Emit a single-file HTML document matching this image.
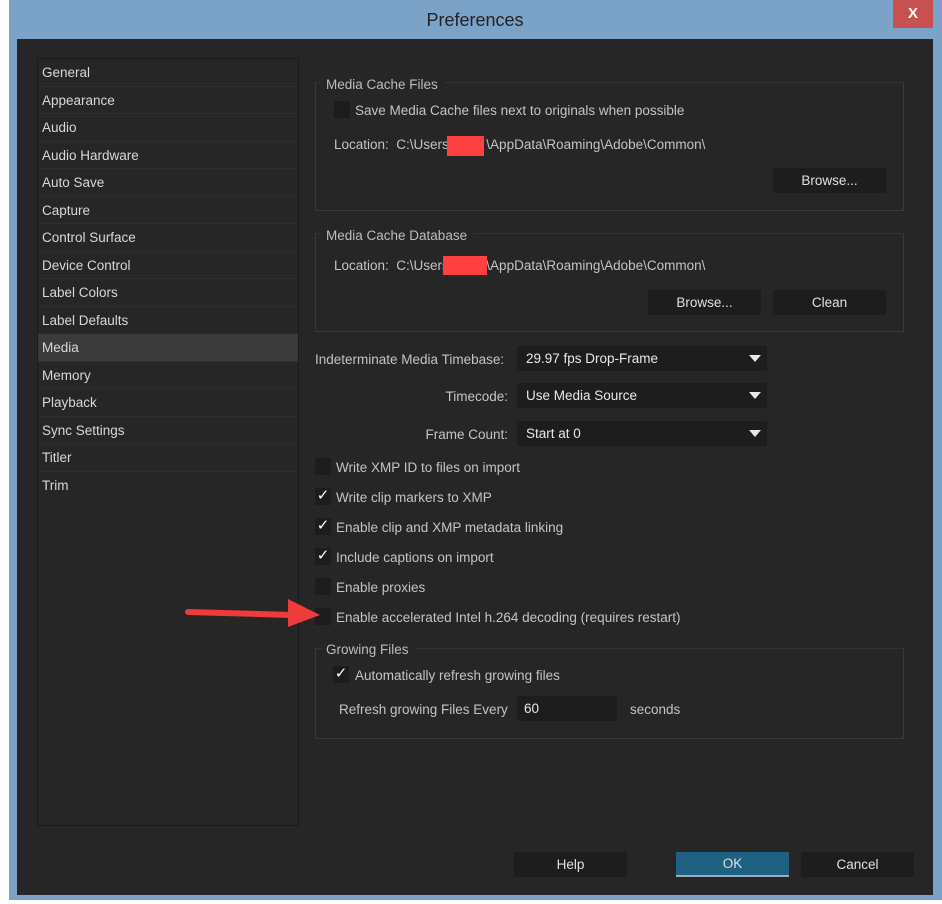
<!DOCTYPE html>
<html><head><style>
body{margin:0;width:942px;height:904px;background:#fff;position:relative;overflow:hidden;font-family:"Liberation Sans",sans-serif;font-size:13.5px;color:#c4c4c4}
div,span{position:absolute;box-sizing:border-box}
.win{left:9px;top:0;width:933px;height:900px;background:#7ba3c7}
.in{left:17px;top:39px;width:916px;height:856px;background:#262626}
.t{white-space:nowrap;margin-top:1px}
.list{left:37px;top:58px;width:262px;height:768px;border:1px solid #1a1a1a;background:#262626}
.li{left:0;width:260px;height:27.5px;border-bottom:1px solid #2e2e2e;padding:6px 4px 0;color:#d8d8d8;font-size:13.5px}
.grp{border:1px solid #3a3a3a;border-top-color:#333}
.gt{background:#262626;padding:0 6px 0 4px;color:#bdbdbd}
.btn{background:#1d1d1d;color:#e0e0e0;text-align:center;line-height:25px;height:25px}
.dd{background:#1d1d1d;color:#e8e8e8;height:25px;padding-left:9px;line-height:26px}
.dd.a:after{content:"";position:absolute;right:6px;top:9px;border-left:6px solid transparent;border-right:6px solid transparent;border-top:7px solid #e8e8e8}
.cb{width:16px;height:17px;background:#1c1c1c;color:#fff;font-size:15px;line-height:16px;text-align:center}
.red{background:#fe4040}
</style></head><body>
<div class="win"></div>
<div class="t" style="left:0;width:950px;top:9px;text-align:center;font-size:18px;color:#222">Preferences</div>
<div style="left:893px;top:0;width:40px;height:28px;background:#c75050;color:#fff;font-weight:bold;text-align:center;line-height:28px;font-size:15px">X</div>
<div class="in"></div>
<div class="list">
<div class="li" style="top:0">General</div>
<div class="li" style="top:27.5px">Appearance</div>
<div class="li" style="top:55px">Audio</div>
<div class="li" style="top:82.5px">Audio Hardware</div>
<div class="li" style="top:110px">Auto Save</div>
<div class="li" style="top:137.5px">Capture</div>
<div class="li" style="top:165px">Control Surface</div>
<div class="li" style="top:192.5px">Device Control</div>
<div class="li" style="top:220px">Label Colors</div>
<div class="li" style="top:247.5px">Label Defaults</div>
<div class="li" style="top:275px;background:#3b3b3b">Media</div>
<div class="li" style="top:302.5px">Memory</div>
<div class="li" style="top:330px">Playback</div>
<div class="li" style="top:357.5px">Sync Settings</div>
<div class="li" style="top:385px">Titler</div>
<div class="li" style="top:412.5px;border:none">Trim</div>
</div>

<div class="grp" style="left:315px;top:82px;width:589px;height:129px"></div>
<div class="t gt" style="left:322px;top:76px">Media Cache Files</div>
<div class="cb" style="left:334px;top:101px"></div>
<div class="t" style="left:355px;top:102px">Save Media Cache files next to originals when possible</div>
<div class="t" style="left:334px;top:136px">Location:&nbsp; C:\Users&nbsp;&nbsp;&nbsp;&nbsp;&nbsp;&nbsp;&nbsp;&nbsp;&nbsp;&nbsp;\AppData\Roaming\Adobe\Common\</div>
<div class="red" style="left:447px;top:136px;width:37px;height:20px"></div>
<div class="btn" style="left:773px;top:168px;width:113px">Browse...</div>

<div class="grp" style="left:315px;top:233px;width:589px;height:99px"></div>
<div class="t gt" style="left:322px;top:227px">Media Cache Database</div>
<div class="t" style="left:334px;top:257px">Location:&nbsp; C:\Users&nbsp;&nbsp;&nbsp;&nbsp;&nbsp;&nbsp;&nbsp;&nbsp;&nbsp;&nbsp;\AppData\Roaming\Adobe\Common\</div>
<div class="red" style="left:443px;top:256px;width:44px;height:19px"></div>
<div class="btn" style="left:648px;top:290px;width:113px">Browse...</div>
<div class="btn" style="left:773px;top:290px;width:113px">Clean</div>

<div class="t" style="left:315px;top:351px">Indeterminate Media Timebase:</div>
<div class="dd a" style="left:517px;top:346px;width:250px">29.97 fps Drop-Frame</div>
<div class="t" style="left:300px;width:208px;text-align:right;top:388px">Timecode:</div>
<div class="dd a" style="left:517px;top:383px;width:250px">Use Media Source</div>
<div class="t" style="left:300px;width:208px;text-align:right;top:426px">Frame Count:</div>
<div class="dd a" style="left:517px;top:421px;width:250px">Start at 0</div>

<div class="cb" style="left:315px;top:458px"></div><div class="t" style="left:336px;top:459px">Write XMP ID to files on import</div>
<div class="cb" style="left:315px;top:488px">✓</div><div class="t" style="left:336px;top:489px">Write clip markers to XMP</div>
<div class="cb" style="left:315px;top:518px">✓</div><div class="t" style="left:336px;top:519px">Enable clip and XMP metadata linking</div>
<div class="cb" style="left:315px;top:548px">✓</div><div class="t" style="left:336px;top:549px">Include captions on import</div>
<div class="cb" style="left:315px;top:578px"></div><div class="t" style="left:336px;top:579px">Enable proxies</div>
<div class="cb" style="left:315px;top:608px"></div><div class="t" style="left:336px;top:609px">Enable accelerated Intel h.264 decoding (requires restart)</div>

<svg style="position:absolute;left:180px;top:595px" width="145" height="36"><path d="M8 17 L112 20" stroke="#ee3b3b" stroke-width="6" stroke-linecap="round"/><path d="M108 4 L140 20 L108 32 Z" fill="#ee3b3b"/></svg>

<div class="grp" style="left:315px;top:648px;width:589px;height:91px"></div>
<div class="t gt" style="left:322px;top:641px">Growing Files</div>
<div class="cb" style="left:333px;top:666px">✓</div><div class="t" style="left:355px;top:667px">Automatically refresh growing files</div>
<div class="t" style="left:339px;top:701px">Refresh growing Files Every</div>
<div class="dd" style="left:517px;top:696px;width:100px;padding-left:7px">60</div>
<div class="t" style="left:630px;top:701px">seconds</div>

<div class="btn" style="left:514px;top:852px;width:113px">Help</div>
<div class="btn" style="left:676px;top:852px;width:113px;background:#1f6182;border-bottom:2px solid #9ab;line-height:24px">OK</div>
<div class="btn" style="left:801px;top:852px;width:113px">Cancel</div>
</body></html>
